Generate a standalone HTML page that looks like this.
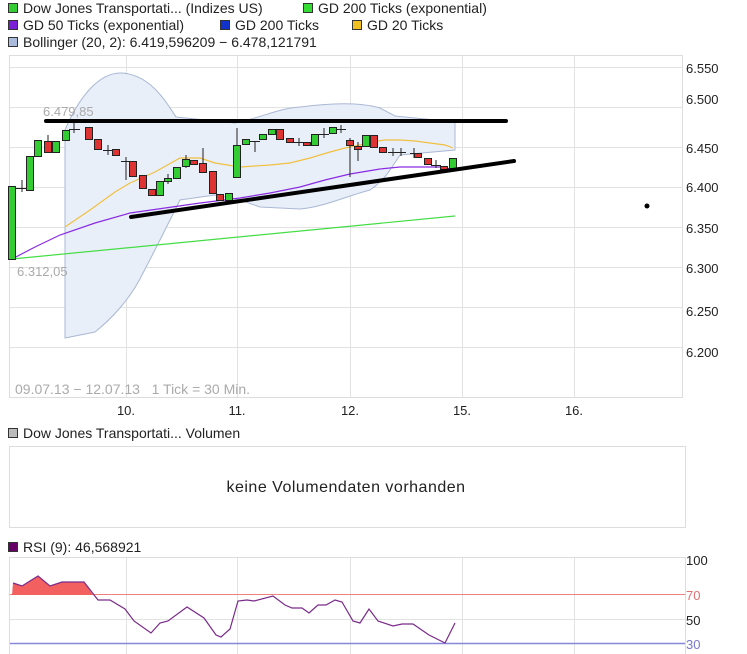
<!DOCTYPE html>
<html><head><meta charset="utf-8"><style>
body{margin:0;background:#fff;width:747px;height:654px;overflow:hidden;font-family:"Liberation Sans",sans-serif}
svg{display:block}
text{font-family:"Liberation Sans",sans-serif}
</style></head><body>
<svg width="747" height="654" xmlns="http://www.w3.org/2000/svg">
<g font-size="14" fill="#222">
<rect x="8.5" y="3.5" width="9" height="9" fill="#33cc33" stroke="#333"/><text x="23" y="13">Dow Jones Transportati... (Indizes US)</text>
<rect x="303.5" y="3.5" width="9" height="9" fill="#33dd33" stroke="#333"/><text x="318" y="13">GD 200 Ticks (exponential)</text>
<rect x="8.5" y="20.5" width="9" height="9" fill="#7a1fd6" stroke="#333"/><text x="23" y="30">GD 50 Ticks (exponential)</text>
<rect x="220.5" y="20.5" width="9" height="9" fill="#1133cc" stroke="#333"/><text x="235" y="30">GD 200 Ticks</text>
<rect x="352.5" y="20.5" width="9" height="9" fill="#f0c020" stroke="#333"/><text x="367" y="30">GD 20 Ticks</text>
<rect x="8.5" y="37.5" width="9" height="9" fill="#aabbdd" stroke="#333"/><text x="23" y="47">Bollinger (20, 2): 6.419,596209 − 6.478,121791</text>
</g>
<rect x="9.5" y="55.5" width="673" height="342" fill="#fff" stroke="#ddd"/>
<g stroke="#e2e2e2">
<line x1="10" y1="67.5" x2="682" y2="67.5"/><line x1="10" y1="107.5" x2="682" y2="107.5"/><line x1="10" y1="147.5" x2="682" y2="147.5"/><line x1="10" y1="187.5" x2="682" y2="187.5"/><line x1="10" y1="227.5" x2="682" y2="227.5"/><line x1="10" y1="267.5" x2="682" y2="267.5"/><line x1="10" y1="307.5" x2="682" y2="307.5"/><line x1="10" y1="347.5" x2="682" y2="347.5"/>
<line x1="126.5" y1="56" x2="126.5" y2="397"/><line x1="237.5" y1="56" x2="237.5" y2="397"/><line x1="350.5" y1="56" x2="350.5" y2="397"/><line x1="462.5" y1="56" x2="462.5" y2="397"/><line x1="574.5" y1="56" x2="574.5" y2="397"/>
</g>
<g font-size="13" fill="#222">
<text x="686" y="73">6.550</text><text x="686" y="104">6.500</text><text x="686" y="153">6.450</text><text x="686" y="192">6.400</text><text x="686" y="233">6.350</text><text x="686" y="273">6.300</text><text x="686" y="316">6.250</text><text x="686" y="357">6.200</text>
</g>
<path d="M65,130 C80,95 100,72 122,73 C150,75 165,100 176,117 L235,123 C260,118 280,108 300,107 C330,103 360,102 380,108 L395,116 L455,122 L455,150 L400,155 C390,170 385,180 370,190 C350,195 320,208 300,209 L260,207 L240,200 L215,195 L180,200 L170,220 C160,240 150,260 143,273 C130,300 110,320 95,332 L65,338 Z" fill="#e9eff9" stroke="#aab8d4" stroke-width="1"/>
<text x="43" y="116" font-size="13" fill="#aaa">6.479,85</text>
<text x="17" y="276" font-size="13" fill="#aaa">6.312,05</text>
<polyline points="12,259 455,216" fill="none" stroke="#44dd44" stroke-width="1.2"/>
<polyline points="12,259 35,247 60,235 95,223 130,213 165,208 200,203 240,198 270,193 300,187 325,180 350,174 380,169 400,167 440,167 455,170" fill="none" stroke="#8a2be2" stroke-width="1.2"/>
<polyline points="65,227 90,210 115,192 130,183 155,172 180,158 200,158 215,163 240,167 270,165 290,163 310,158 330,152 345,148 360,145 370,142 385,140 400,140 415,141 430,143 445,145 453,148" fill="none" stroke="#f0c040" stroke-width="1.2"/>
<g stroke="#222" stroke-width="1">
<line x1="22" y1="180" x2="22" y2="192"/><line x1="74" y1="123" x2="74" y2="133"/><line x1="48" y1="135" x2="48" y2="153"/>
<line x1="108" y1="145" x2="108" y2="155"/><line x1="126" y1="157" x2="126" y2="180"/><line x1="203" y1="148" x2="203" y2="172"/>
<line x1="237" y1="128" x2="237" y2="177"/><line x1="255" y1="142" x2="255" y2="152"/><line x1="299" y1="138" x2="299" y2="146"/>
<line x1="324" y1="128" x2="324" y2="138"/><line x1="341" y1="125" x2="341" y2="133"/><line x1="350" y1="138" x2="350" y2="177"/>
<line x1="358" y1="142" x2="358" y2="161"/><line x1="393" y1="148" x2="393" y2="156"/><line x1="401" y1="148" x2="401" y2="156"/><line x1="414" y1="148" x2="414" y2="158"/><line x1="436" y1="160" x2="436" y2="168"/><line x1="168" y1="174" x2="168" y2="184"/><line x1="186" y1="155" x2="186" y2="168"/>
<line x1="16" y1="188.5" x2="28" y2="188.5"/><line x1="69" y1="129.5" x2="80" y2="129.5"/><line x1="103" y1="150.5" x2="114" y2="150.5"/><line x1="121" y1="161.5" x2="131" y2="161.5"/><line x1="250" y1="141.5" x2="260" y2="141.5"/><line x1="294" y1="142.5" x2="304" y2="142.5"/><line x1="319" y1="134.5" x2="329" y2="134.5"/><line x1="336" y1="129.5" x2="346" y2="129.5"/><line x1="388" y1="152.5" x2="406" y2="152.5"/><line x1="410" y1="153.5" x2="419" y2="153.5"/><line x1="431" y1="165.5" x2="441" y2="165.5"/>
</g>
<g stroke="#222" stroke-width="1" fill="#33cc33">
<rect x="8.5" y="186.5" width="7" height="73"/><rect x="26.5" y="156.5" width="7" height="34"/><rect x="34.5" y="140.5" width="7" height="16"/><rect x="52.5" y="141.5" width="7" height="11"/><rect x="62.5" y="130.5" width="7" height="10"/>
<rect x="156.5" y="181.5" width="7" height="14"/><rect x="164.5" y="178.5" width="7" height="3"/><rect x="173.5" y="167.5" width="7" height="11"/><rect x="182.5" y="159.5" width="7" height="7"/><rect x="225.5" y="193.5" width="7" height="7"/>
<rect x="233.5" y="145.5" width="7" height="32"/><rect x="242.5" y="139.5" width="7" height="5"/><rect x="259.5" y="134.5" width="7" height="5"/><rect x="268.5" y="129.5" width="7" height="5"/><rect x="311.5" y="134.5" width="7" height="11"/><rect x="329.5" y="127.5" width="7" height="6"/><rect x="362.5" y="135.5" width="7" height="11"/><rect x="449.5" y="158.5" width="7" height="10"/>
</g>
<g stroke="#222" stroke-width="1" fill="#dd3333">
<rect x="44.5" y="141.5" width="7" height="11"/><rect x="85.5" y="127.5" width="7" height="12"/><rect x="94.5" y="139.5" width="7" height="10"/><rect x="112.5" y="149.5" width="7" height="6"/><rect x="129.5" y="161.5" width="7" height="15"/><rect x="139.5" y="175.5" width="7" height="13"/><rect x="148.5" y="189.5" width="7" height="6"/>
<rect x="190.5" y="160.5" width="7" height="4"/><rect x="199.5" y="163.5" width="7" height="9"/><rect x="209.5" y="171.5" width="7" height="22"/><rect x="216.5" y="194.5" width="7" height="6"/><rect x="276.5" y="129.5" width="7" height="10"/><rect x="286.5" y="138.5" width="7" height="4"/><rect x="303.5" y="142.5" width="7" height="3"/>
<rect x="346.5" y="140.5" width="7" height="5"/><rect x="354.5" y="146.5" width="7" height="3"/><rect x="370.5" y="135.5" width="7" height="12"/><rect x="379.5" y="147.5" width="7" height="5"/><rect x="414.5" y="153.5" width="7" height="4"/><rect x="424.5" y="158.5" width="7" height="6"/><rect x="440.5" y="166.5" width="7" height="3"/>
</g>
<line x1="46" y1="121" x2="506" y2="121" stroke="#000" stroke-width="4" stroke-linecap="round"/>
<line x1="131" y1="217" x2="514" y2="161" stroke="#000" stroke-width="4" stroke-linecap="round"/>
<circle cx="647" cy="206" r="2.5" fill="#000"/>
<text x="15" y="394" font-size="14" fill="#aaa">09.07.13 − 12.07.13 &#160;&#160;1 Tick = 30 Min.</text>
<g font-size="13" fill="#222" text-anchor="middle">
<text x="126" y="415">10.</text><text x="237" y="415">11.</text><text x="350" y="415">12.</text><text x="462" y="415">15.</text><text x="574" y="415">16.</text>
</g>
<rect x="8.5" y="428.5" width="9" height="9" fill="#bbb" stroke="#333"/><text x="23" y="438" font-size="14" fill="#222">Dow Jones Transportati... Volumen</text>
<rect x="9.5" y="446.5" width="676" height="81" fill="#fff" stroke="#ddd"/>
<text x="346" y="492" font-size="16" letter-spacing="0.5" fill="#222" text-anchor="middle">keine Volumendaten vorhanden</text>
<rect x="8.5" y="542.5" width="9" height="9" fill="#660066" stroke="#333"/><text x="23" y="552" font-size="14" fill="#222">RSI (9): 46,568921</text>
<rect x="9.5" y="557.5" width="676" height="100" fill="#fff" stroke="#ddd"/>
<g stroke="#e2e2e2"><line x1="126.5" y1="558" x2="126.5" y2="654"/><line x1="237.5" y1="558" x2="237.5" y2="654"/><line x1="350.5" y1="558" x2="350.5" y2="654"/><line x1="462.5" y1="558" x2="462.5" y2="654"/><line x1="574.5" y1="558" x2="574.5" y2="654"/><line x1="10" y1="619.5" x2="685" y2="619.5"/></g>
<line x1="10" y1="594.5" x2="685" y2="594.5" stroke="#f08080"/>
<line x1="10" y1="643.5" x2="685" y2="643.5" stroke="#8888dd" stroke-width="1.5"/>
<polygon points="12,595 13,583 22,586 38,576 50,586 62,582 84,582 93,595" fill="#f26060"/>
<polyline points="13,583 22,586 38,576 50,586 62,582 84,582 98,600 110,600 125,609 134,621 151,633 160,623 168,621 187,607 204,618 216,635 221,637 230,629 238,601 247,600 254,601 273,596 285,605 292,608 302,608 309,613 318,605 326,605 335,600 342,602 353,621 360,623 369,609 378,621 393,626 402,624 413,624 429,635 445,643 455,623" fill="none" stroke="#7a2a8a" stroke-width="1.2"/>
<g font-size="13"><text x="686" y="565" fill="#222">100</text><text x="686" y="600" fill="#e07070">70</text><text x="686" y="625" fill="#222">50</text><text x="686" y="649" fill="#7777cc">30</text></g>
</svg>
</body></html>
